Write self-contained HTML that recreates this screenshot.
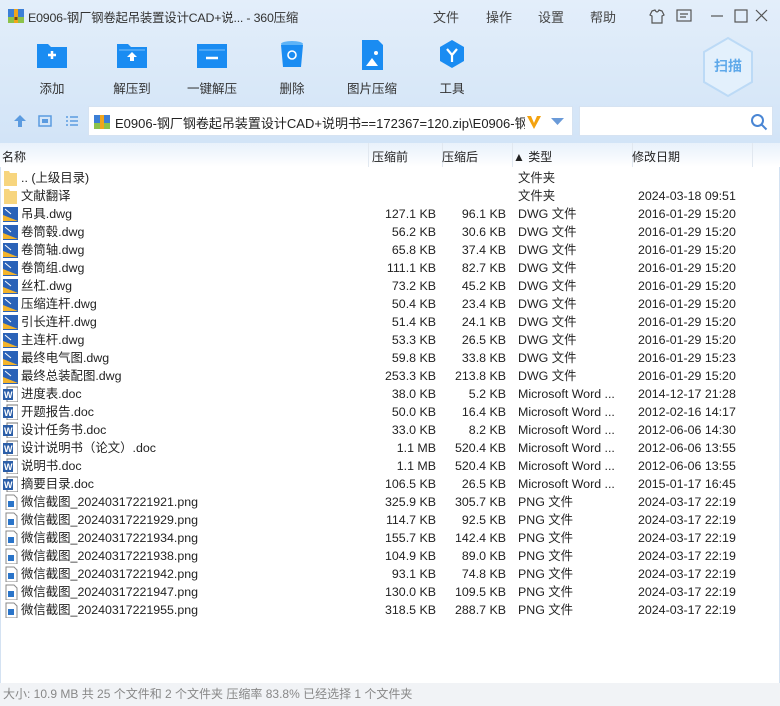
<!DOCTYPE html>
<html><head><meta charset="utf-8"><style>
*{margin:0;padding:0;box-sizing:border-box}
body{width:780px;height:706px;overflow:hidden;font-family:"Liberation Sans","Noto Sans CJK SC",sans-serif;font-size:12px;color:#222;background:#fff;position:relative}
.top{position:absolute;left:0;top:0;width:780px;height:143px;background:linear-gradient(#e3eefa,#d2e4f7);}
.title{position:absolute;left:28px;top:8px;font-size:12.4px;color:#333;letter-spacing:-0.2px}
.menu{position:absolute;top:7px;font-size:13px;color:#444}
.tb{position:absolute;top:40px;width:80px;text-align:center}
.tb .lb{position:absolute;top:38px;left:0;width:80px;font-size:12.5px;color:#333}
.ico{position:absolute;left:24px;top:0;width:32px;height:30px}
.addr{position:absolute;left:88px;top:106px;width:485px;height:30px;background:#fff;border:1px solid #d6e3f2}
.search{position:absolute;left:579px;top:106px;width:194px;height:30px;background:#fff;border:1px solid #d6e3f2}
.hdr{position:absolute;left:0;top:143px;width:780px;height:24px;background:linear-gradient(#e8f1fb,#fff)}
.hdr span{position:absolute;top:5px}
.sep{position:absolute;top:0;width:1px;height:24px;background:#e1e8f0}
.row{position:absolute;left:0;height:18px;width:780px;line-height:18px;white-space:nowrap;font-size:12.4px}
.row .n{position:absolute;left:21px}
.row .a{position:absolute;right:344px;text-align:right}
.row .b{position:absolute;right:274px;text-align:right}
.row .t{position:absolute;left:518px}
.row .d{position:absolute;left:638px}
.fi{position:absolute;left:3px;top:1px;width:15px;height:16px}
.status{position:absolute;left:0;top:683px;width:780px;height:23px;background:#f1f3f6;color:#888;font-size:12px;line-height:22px;padding-left:3px}
.side{position:absolute;left:0;top:167px;width:1px;height:516px;background:#d4e2f2}
.side2{position:absolute;right:0;top:167px;width:1px;height:516px;background:#d4e2f2}
</style></head><body>
<div class="top"></div>
<svg style="position:absolute;left:8px;top:8px" width="16" height="16"><rect x="0" y="1" width="16" height="14" fill="#3c7fd6"/><rect x="0" y="9" width="16" height="6" fill="#8cc24a"/><rect x="6" y="1" width="4" height="14" fill="#f0a51c"/><rect x="6.5" y="9" width="3" height="3" fill="#7a4a10"/></svg>
<div class="title">E0906-钢厂钢卷起吊装置设计CAD+说... - 360压缩</div>
<div class="menu" style="left:433px">文件</div><div class="menu" style="left:486px">操作</div><div class="menu" style="left:538px">设置</div><div class="menu" style="left:590px">帮助</div>
<svg style="position:absolute;left:648px;top:8px" width="120" height="16" fill="none" stroke="#555" stroke-width="1.2">
<path d="M4 3l3-1q1 2 2 2t2-2l3 1 2 4-2 1v7h-10v-7l-2-1z"/>
<rect x="29" y="2" width="14" height="11"/><path d="M32 6h8M32 9h6"/>
<path d="M63 8h12"/><rect x="87" y="2" width="12" height="12"/><path d="M108 2l11 11M119 2l-11 11"/></svg>

<div class="tb" style="left:12px"><svg class="ico" viewBox="0 0 32 30"><path d="M1 4h11l3 3h16v21H1z" fill="#1a8cf2"/><path d="M12 15h8M16 11v8" stroke="#fff" stroke-width="2.5"/></svg><div class="lb">添加</div></div>
<div class="tb" style="left:92px"><svg class="ico" viewBox="0 0 32 30"><path d="M1 4h11l3 3h16v21H1z" fill="#1a8cf2"/><path d="M3 10h26" stroke="#7cc0fa"/><path d="M16 12l-5 5h3v4h4v-4h3z" fill="#fff"/></svg><div class="lb">解压到</div></div>
<div class="tb" style="left:172px"><svg class="ico" viewBox="0 0 32 30"><path d="M1 4h30v24H1z" fill="#1a8cf2" rx="2"/><path d="M3 10h26" stroke="#7cc0fa"/><path d="M10 18h12" stroke="#fff" stroke-width="2.5"/></svg><div class="lb">一键解压</div></div>
<div class="tb" style="left:252px"><svg class="ico" viewBox="0 0 32 30"><ellipse cx="16" cy="4" rx="11" ry="3" fill="#5db3f7"/><path d="M5 5h22l-2 22h-18z" fill="#1a8cf2"/><circle cx="16" cy="15" r="4" fill="none" stroke="#fff" stroke-width="1.6"/></svg><div class="lb">删除</div></div>
<div class="tb" style="left:332px"><svg class="ico" viewBox="0 0 32 30"><path d="M6 0h16l5 5v25H6z" fill="#1a8cf2"/><path d="M10 26l6-8 6 8z" fill="#fff"/><circle cx="20" cy="13" r="2" fill="#fff"/></svg><div class="lb">图片压缩</div></div>
<div class="tb" style="left:412px"><svg class="ico" viewBox="0 0 32 30"><path d="M16 0l12 7v14l-12 7-12-7V7z" fill="#1a8cf2"/><path d="M11 9l5 6 5-6M16 15v7" stroke="#fff" stroke-width="2.2" fill="none"/></svg><div class="lb">工具</div></div>
<svg style="position:absolute;left:700px;top:36px" width="56" height="62"><path d="M28 2l24 14v30l-24 14-24-14V16z" fill="#e3f0fc" stroke="#bcdaf6" stroke-width="2"/><text x="28" y="35" text-anchor="middle" font-size="14" font-weight="bold" fill="#5fa9ea" font-family="Noto Sans CJK SC">扫描</text></svg>

<svg style="position:absolute;left:12px;top:113px" width="70" height="16"><path d="M8 2l-6 6h4v6h4V8h4z" fill="#5b9be0"/><rect x="27" y="3" width="12" height="10" fill="none" stroke="#5b9be0" stroke-width="1.5"/><rect x="30" y="6" width="6" height="4" fill="#5b9be0"/><path d="M54 4h2M58 4h8M54 8h2M58 8h8M54 12h2M58 12h8" stroke="#5b9be0" stroke-width="1.5"/></svg>
<div class="addr"><svg style="position:absolute;left:5px;top:7px" width="16" height="16"><rect x="0" y="1" width="16" height="14" fill="#3c7fd6"/><rect x="0" y="9" width="16" height="6" fill="#8cc24a"/><rect x="6" y="1" width="4" height="14" fill="#f0a51c"/></svg>
<div style="position:absolute;left:26px;top:6px;font-size:13px;width:410px;overflow:hidden;white-space:nowrap">E0906-钢厂钢卷起吊装置设计CAD+说明书==172367=120.zip\E0906-钢厂钢卷</div>
<svg style="position:absolute;left:437px;top:6px" width="16" height="18"><path d="M1 3l7 13 7-13h-4l-3 7-3-7z" fill="#f3a20f"/></svg>
<svg style="position:absolute;left:462px;top:11px" width="14" height="8"><path d="M0 0h13l-6.5 7z" fill="#6a9ad8"/></svg></div>
<div class="search"><svg style="position:absolute;left:170px;top:6px" width="18" height="18" fill="none" stroke="#4a86d4" stroke-width="2"><circle cx="7.5" cy="7.5" r="5.5"/><path d="M11.5 11.5l5 5"/></svg></div>

<div class="hdr"><span style="left:2px">名称</span><div class="sep" style="left:368px"></div><span style="left:372px">压缩前</span><div class="sep" style="left:442px"></div><span style="left:442px">压缩后</span><div class="sep" style="left:512px"></div><span style="left:513px">▲ 类型</span><div class="sep" style="left:632px"></div><span style="left:632px">修改日期</span><div class="sep" style="left:752px"></div></div>
<div class="side"></div><div class="side2"></div>
<div class="status">大小: 10.9 MB 共 25 个文件和 2 个文件夹 压缩率 83.8% 已经选择 1 个文件夹</div>
<div>
<div class="row" style="top:169px"><svg class="fi"><path d="M1 1h5l1 2h7v13H1z" fill="#f7d57e"/></svg><span class="n">.. (上级目录)</span><span class="t">文件夹</span></div>
<div class="row" style="top:187px"><svg class="fi"><path d="M1 1h5l1 2h7v13H1z" fill="#f7d57e"/></svg><span class="n">文献翻译</span><span class="t">文件夹</span><span class="d">2024-03-18 09:51</span></div>
<div class="row" style="top:205px"><svg class="fi"><rect x="0" y="1" width="15" height="15" fill="#2a62b8"/><path d="M0 9l15 6H0z" fill="#f3b42c"/><path d="M2 3l6 5" stroke="#fff"/></svg><span class="n">吊具.dwg</span><span class="a">127.1 KB</span><span class="b">96.1 KB</span><span class="t">DWG 文件</span><span class="d">2016-01-29 15:20</span></div>
<div class="row" style="top:223px"><svg class="fi"><rect x="0" y="1" width="15" height="15" fill="#2a62b8"/><path d="M0 9l15 6H0z" fill="#f3b42c"/><path d="M2 3l6 5" stroke="#fff"/></svg><span class="n">卷筒毂.dwg</span><span class="a">56.2 KB</span><span class="b">30.6 KB</span><span class="t">DWG 文件</span><span class="d">2016-01-29 15:20</span></div>
<div class="row" style="top:241px"><svg class="fi"><rect x="0" y="1" width="15" height="15" fill="#2a62b8"/><path d="M0 9l15 6H0z" fill="#f3b42c"/><path d="M2 3l6 5" stroke="#fff"/></svg><span class="n">卷筒轴.dwg</span><span class="a">65.8 KB</span><span class="b">37.4 KB</span><span class="t">DWG 文件</span><span class="d">2016-01-29 15:20</span></div>
<div class="row" style="top:259px"><svg class="fi"><rect x="0" y="1" width="15" height="15" fill="#2a62b8"/><path d="M0 9l15 6H0z" fill="#f3b42c"/><path d="M2 3l6 5" stroke="#fff"/></svg><span class="n">卷筒组.dwg</span><span class="a">111.1 KB</span><span class="b">82.7 KB</span><span class="t">DWG 文件</span><span class="d">2016-01-29 15:20</span></div>
<div class="row" style="top:277px"><svg class="fi"><rect x="0" y="1" width="15" height="15" fill="#2a62b8"/><path d="M0 9l15 6H0z" fill="#f3b42c"/><path d="M2 3l6 5" stroke="#fff"/></svg><span class="n">丝杠.dwg</span><span class="a">73.2 KB</span><span class="b">45.2 KB</span><span class="t">DWG 文件</span><span class="d">2016-01-29 15:20</span></div>
<div class="row" style="top:295px"><svg class="fi"><rect x="0" y="1" width="15" height="15" fill="#2a62b8"/><path d="M0 9l15 6H0z" fill="#f3b42c"/><path d="M2 3l6 5" stroke="#fff"/></svg><span class="n">压缩连杆.dwg</span><span class="a">50.4 KB</span><span class="b">23.4 KB</span><span class="t">DWG 文件</span><span class="d">2016-01-29 15:20</span></div>
<div class="row" style="top:313px"><svg class="fi"><rect x="0" y="1" width="15" height="15" fill="#2a62b8"/><path d="M0 9l15 6H0z" fill="#f3b42c"/><path d="M2 3l6 5" stroke="#fff"/></svg><span class="n">引长连杆.dwg</span><span class="a">51.4 KB</span><span class="b">24.1 KB</span><span class="t">DWG 文件</span><span class="d">2016-01-29 15:20</span></div>
<div class="row" style="top:331px"><svg class="fi"><rect x="0" y="1" width="15" height="15" fill="#2a62b8"/><path d="M0 9l15 6H0z" fill="#f3b42c"/><path d="M2 3l6 5" stroke="#fff"/></svg><span class="n">主连杆.dwg</span><span class="a">53.3 KB</span><span class="b">26.5 KB</span><span class="t">DWG 文件</span><span class="d">2016-01-29 15:20</span></div>
<div class="row" style="top:349px"><svg class="fi"><rect x="0" y="1" width="15" height="15" fill="#2a62b8"/><path d="M0 9l15 6H0z" fill="#f3b42c"/><path d="M2 3l6 5" stroke="#fff"/></svg><span class="n">最终电气图.dwg</span><span class="a">59.8 KB</span><span class="b">33.8 KB</span><span class="t">DWG 文件</span><span class="d">2016-01-29 15:23</span></div>
<div class="row" style="top:367px"><svg class="fi"><rect x="0" y="1" width="15" height="15" fill="#2a62b8"/><path d="M0 9l15 6H0z" fill="#f3b42c"/><path d="M2 3l6 5" stroke="#fff"/></svg><span class="n">最终总装配图.dwg</span><span class="a">253.3 KB</span><span class="b">213.8 KB</span><span class="t">DWG 文件</span><span class="d">2016-01-29 15:20</span></div>
<div class="row" style="top:385px"><svg class="fi"><rect x="4" y="1" width="11" height="15" fill="#fff" stroke="#777"/><rect x="0" y="3" width="10" height="11" fill="#2b5ea8"/><text x="1" y="12" font-size="9" fill="#fff" font-weight="bold">W</text></svg><span class="n">进度表.doc</span><span class="a">38.0 KB</span><span class="b">5.2 KB</span><span class="t">Microsoft Word ...</span><span class="d">2014-12-17 21:28</span></div>
<div class="row" style="top:403px"><svg class="fi"><rect x="4" y="1" width="11" height="15" fill="#fff" stroke="#777"/><rect x="0" y="3" width="10" height="11" fill="#2b5ea8"/><text x="1" y="12" font-size="9" fill="#fff" font-weight="bold">W</text></svg><span class="n">开题报告.doc</span><span class="a">50.0 KB</span><span class="b">16.4 KB</span><span class="t">Microsoft Word ...</span><span class="d">2012-02-16 14:17</span></div>
<div class="row" style="top:421px"><svg class="fi"><rect x="4" y="1" width="11" height="15" fill="#fff" stroke="#777"/><rect x="0" y="3" width="10" height="11" fill="#2b5ea8"/><text x="1" y="12" font-size="9" fill="#fff" font-weight="bold">W</text></svg><span class="n">设计任务书.doc</span><span class="a">33.0 KB</span><span class="b">8.2 KB</span><span class="t">Microsoft Word ...</span><span class="d">2012-06-06 14:30</span></div>
<div class="row" style="top:439px"><svg class="fi"><rect x="4" y="1" width="11" height="15" fill="#fff" stroke="#777"/><rect x="0" y="3" width="10" height="11" fill="#2b5ea8"/><text x="1" y="12" font-size="9" fill="#fff" font-weight="bold">W</text></svg><span class="n">设计说明书（论文）.doc</span><span class="a">1.1 MB</span><span class="b">520.4 KB</span><span class="t">Microsoft Word ...</span><span class="d">2012-06-06 13:55</span></div>
<div class="row" style="top:457px"><svg class="fi"><rect x="4" y="1" width="11" height="15" fill="#fff" stroke="#777"/><rect x="0" y="3" width="10" height="11" fill="#2b5ea8"/><text x="1" y="12" font-size="9" fill="#fff" font-weight="bold">W</text></svg><span class="n">说明书.doc</span><span class="a">1.1 MB</span><span class="b">520.4 KB</span><span class="t">Microsoft Word ...</span><span class="d">2012-06-06 13:55</span></div>
<div class="row" style="top:475px"><svg class="fi"><rect x="4" y="1" width="11" height="15" fill="#fff" stroke="#777"/><rect x="0" y="3" width="10" height="11" fill="#2b5ea8"/><text x="1" y="12" font-size="9" fill="#fff" font-weight="bold">W</text></svg><span class="n">摘要目录.doc</span><span class="a">106.5 KB</span><span class="b">26.5 KB</span><span class="t">Microsoft Word ...</span><span class="d">2015-01-17 16:45</span></div>
<div class="row" style="top:493px"><svg class="fi"><path d="M3 1h8l3 3v12H3z" fill="#fff" stroke="#888"/><rect x="5" y="7" width="6" height="6" fill="#2a74c9"/></svg><span class="n">微信截图_20240317221921.png</span><span class="a">325.9 KB</span><span class="b">305.7 KB</span><span class="t">PNG 文件</span><span class="d">2024-03-17 22:19</span></div>
<div class="row" style="top:511px"><svg class="fi"><path d="M3 1h8l3 3v12H3z" fill="#fff" stroke="#888"/><rect x="5" y="7" width="6" height="6" fill="#2a74c9"/></svg><span class="n">微信截图_20240317221929.png</span><span class="a">114.7 KB</span><span class="b">92.5 KB</span><span class="t">PNG 文件</span><span class="d">2024-03-17 22:19</span></div>
<div class="row" style="top:529px"><svg class="fi"><path d="M3 1h8l3 3v12H3z" fill="#fff" stroke="#888"/><rect x="5" y="7" width="6" height="6" fill="#2a74c9"/></svg><span class="n">微信截图_20240317221934.png</span><span class="a">155.7 KB</span><span class="b">142.4 KB</span><span class="t">PNG 文件</span><span class="d">2024-03-17 22:19</span></div>
<div class="row" style="top:547px"><svg class="fi"><path d="M3 1h8l3 3v12H3z" fill="#fff" stroke="#888"/><rect x="5" y="7" width="6" height="6" fill="#2a74c9"/></svg><span class="n">微信截图_20240317221938.png</span><span class="a">104.9 KB</span><span class="b">89.0 KB</span><span class="t">PNG 文件</span><span class="d">2024-03-17 22:19</span></div>
<div class="row" style="top:565px"><svg class="fi"><path d="M3 1h8l3 3v12H3z" fill="#fff" stroke="#888"/><rect x="5" y="7" width="6" height="6" fill="#2a74c9"/></svg><span class="n">微信截图_20240317221942.png</span><span class="a">93.1 KB</span><span class="b">74.8 KB</span><span class="t">PNG 文件</span><span class="d">2024-03-17 22:19</span></div>
<div class="row" style="top:583px"><svg class="fi"><path d="M3 1h8l3 3v12H3z" fill="#fff" stroke="#888"/><rect x="5" y="7" width="6" height="6" fill="#2a74c9"/></svg><span class="n">微信截图_20240317221947.png</span><span class="a">130.0 KB</span><span class="b">109.5 KB</span><span class="t">PNG 文件</span><span class="d">2024-03-17 22:19</span></div>
<div class="row" style="top:601px"><svg class="fi"><path d="M3 1h8l3 3v12H3z" fill="#fff" stroke="#888"/><rect x="5" y="7" width="6" height="6" fill="#2a74c9"/></svg><span class="n">微信截图_20240317221955.png</span><span class="a">318.5 KB</span><span class="b">288.7 KB</span><span class="t">PNG 文件</span><span class="d">2024-03-17 22:19</span></div>
</div>
</body></html>
